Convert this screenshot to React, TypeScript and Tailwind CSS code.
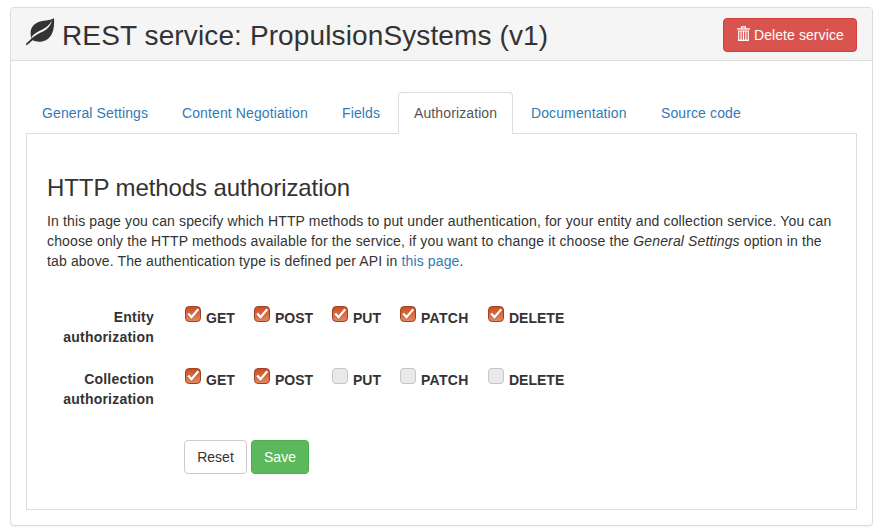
import React from "react";

const tabs = [
  { name: "General Settings", width: "w-[138px]" },
  { name: "Content Negotiation", width: "w-[158px]" },
  { name: "Fields", width: "w-[70px]" },
  { name: "Authorization", width: "w-[115px]" },
  { name: "Documentation", width: "w-[128px]" },
  { name: "Source code", width: "w-[112px]" },
];

const methods = [
  { name: "GET", width: "w-[69px]" },
  { name: "POST", width: "w-[78px]" },
  { name: "PUT", width: "w-[68px]" },
  { name: "PATCH", width: "w-[88px] tracking-[0.3px]" },
  { name: "DELETE", width: "w-[90px]" },
];

function Leaf() {
  return (
    <svg width="29" height="28" viewBox="0 0 29 28" className="shrink-0">
      <path
        d="M28 0C26.5 1.8 23 2.2 18 2.8C10 3.8 4.6 8 4.6 15C4.6 17.4 5 19.2 5.6 20.6C3.8 22.4 1.6 24.3 0 25.7L0.3 27.4C2.6 25.9 4.5 24.2 6.6 22.3C9 23.6 13 24.2 17 23.2C25.5 21.2 28.9 12.5 28 0Z"
        fill="#333"
      />
      <path
        d="M25.9 2.6C23.4 7.2 19.8 10.1 15.5 12C10.8 14.1 7.6 16.2 5.4 19.2L6 20C9.8 16.8 13.1 15.2 17 13.4C21.6 11.2 24.9 7.8 25.9 2.6Z"
        fill="#f5f5f5"
      />
    </svg>
  );
}

function Trash() {
  return (
    <svg width="13" height="16" viewBox="0 0 13 16" className="shrink-0">
      <path d="M4.5 2.5V0.8H8.5V2.5" fill="none" stroke="#fff" strokeWidth="1.2" />
      <path d="M0 2.3H13V3.6H0Z" fill="#fff" />
      <path d="M1.7 5V14.4H11.3V5M4.1 5V14M6.5 5V14M8.9 5V14" fill="none" stroke="#fff" strokeWidth="1.15" />
      <path d="M1.1 4.4H11.9V5.4H1.1ZM1.1 13.7H11.9V15H1.1Z" fill="#fff" />
    </svg>
  );
}

function Checkbox({ checked }: { checked: boolean }) {
  if (!checked) {
    return <span className="h-4 w-4 shrink-0 rounded-[4px] border border-[#c4c4c4] bg-[#e9e9e9]" />;
  }
  return (
    <span className="h-4 w-4 shrink-0 rounded-[4px] border border-[#9a4325] bg-linear-to-b from-[#cf4c1c] to-[#e38661]">
      <svg width="14" height="14" viewBox="0 0 14 14" className="block">
        <path d="M2.2 6.9L5.5 10.6L12.3 2.5" fill="none" stroke="#8b3a1c" strokeOpacity="0.4" strokeWidth="3.2" />
        <path d="M2.2 6.5L5.5 10.2L12.3 2.2" fill="none" stroke="#fff" strokeWidth="2.4" />
      </svg>
    </span>
  );
}

function MethodRow({ label, checked }: { label: string; checked: number }) {
  return (
    <div className="flex h-[62px] font-bold">
      <div className="mr-[31px] w-[107px] whitespace-pre-line text-right tracking-[0.22px]">
        {label + "\nauthorization"}
      </div>
      <div className="flex">
        {methods.map((method, i) => (
          <label key={method.name} className={"flex " + method.width}>
            <span className="-mt-px mr-[5px] flex">
              <Checkbox checked={i < checked} />
            </span>
            <span className="pt-px">{method.name}</span>
          </label>
        ))}
      </div>
    </div>
  );
}

export default function App() {
  return (
    <div className="h-[531px] w-[881px] overflow-hidden bg-white pl-[10px] pt-[7px] font-['Liberation_Sans',Arial,sans-serif] text-[14px] leading-[20px] text-[#333]">
      <section className="h-[519px] w-[863px] rounded-[4px] border border-[#ddd] bg-white shadow-[0_1px_1px_rgba(0,0,0,0.05)]">
        <header className="flex h-[53px] rounded-t-[3px] border-b border-[#ddd] bg-[#f5f5f5] px-[15px]">
          <div className="pt-[10px]">
            <Leaf />
          </div>
          <h1 className="ml-[7px] whitespace-nowrap pt-[11px] text-[28px] leading-[33px] tracking-[0.12px]">
            REST service: PropulsionSystems (v1)
          </h1>
          <button className="ml-auto mt-[10px] flex h-[34px] w-[134px] rounded-[4px] border border-[#d43f3a] bg-[#d9534f] pl-[13px] pt-[6px] text-white">
            <span className="mt-px">
              <Trash />
            </span>
            <span className="ml-1 whitespace-nowrap tracking-[0.08px]">Delete service</span>
          </button>
        </header>
        <div className="px-[15px] pt-[31px]">
          <nav className="flex h-[42px] gap-[2px] border-b border-[#ddd] tracking-[0.11px]">
            {tabs.map((tab) => (
              <a
                key={tab.name}
                className={
                  "h-[42px] whitespace-nowrap rounded-t-[4px] border px-[15px] pt-[10px] " +
                  tab.width +
                  (tab.name === "Authorization"
                    ? " border-[#ddd] border-b-white bg-white text-[#555]"
                    : " border-transparent text-[#337ab7]")
                }
              >
                {tab.name}
              </a>
            ))}
          </nav>
          <div className="h-[376px] border border-t-0 border-[#ddd] pl-[20px] pt-[41px]">
            <h2 className="text-[24px] leading-[26px] tracking-[-0.08px]">HTTP methods authorization</h2>
            <p className="mt-[10px] whitespace-nowrap tracking-[0.133px]">
              In this page you can specify which HTTP methods to put under authentication, for your entity and collection service. You can
              <br />
              choose only the HTTP methods available for the service, if you want to change it choose the <em>General Settings</em> option in the
              <br />
              tab above. The authentication type is defined per API in <a className="text-[#337ab7]">this page</a>.
            </p>
            <div className="mt-[36px]">
              <MethodRow label="Entity" checked={5} />
              <MethodRow label="Collection" checked={2} />
            </div>
            <div className="ml-[137px] mt-[9px] flex gap-1">
              <button className="h-[34px] w-[63px] rounded-[4px] border border-[#ccc] bg-white">Reset</button>
              <button className="h-[34px] w-[58px] rounded-[4px] border border-[#4cae4c] bg-[#5cb85c] text-white">Save</button>
            </div>
          </div>
        </div>
      </section>
    </div>
  );
}
